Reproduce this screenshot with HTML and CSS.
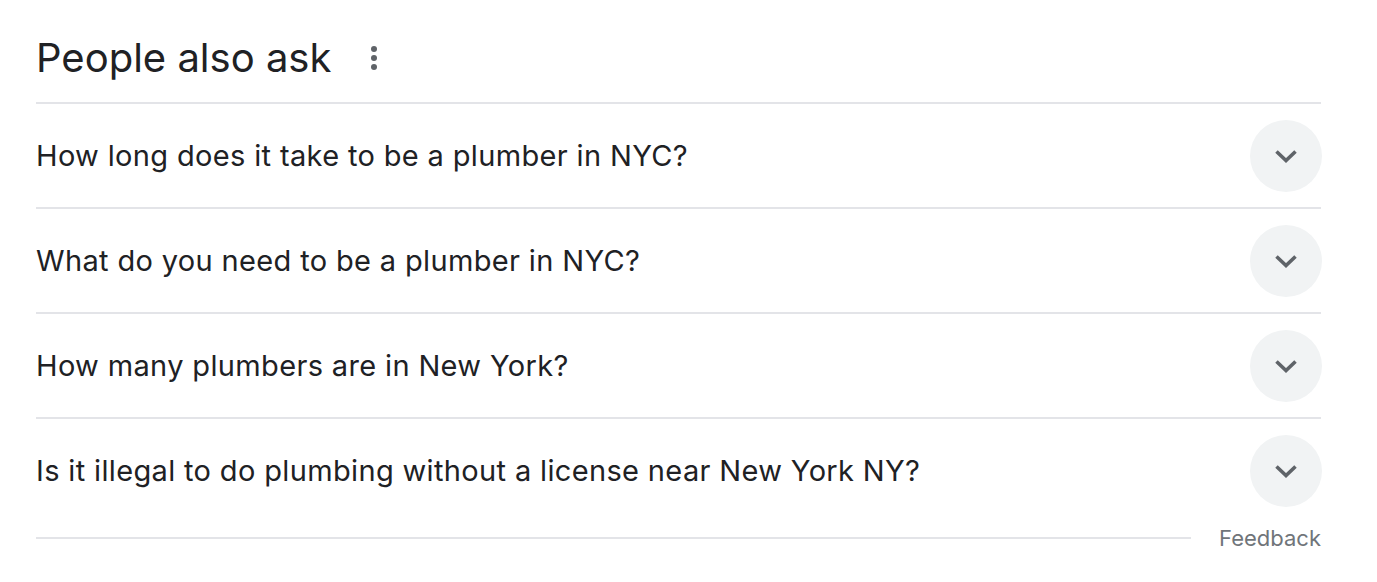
FILE: index.html
```html
<!DOCTYPE html>
<html>
<head>
<meta charset="utf-8">
<link rel="stylesheet" href="styles.css">
</head>
<body>
<div class="paa">
  <div class="head">
    <h2 class="title">People also ask</h2>
    <svg class="dots" width="12" height="28" viewBox="0 0 12 28"><circle cx="6" cy="5" r="3"/><circle cx="6" cy="14" r="3"/><circle cx="6" cy="23" r="3"/></svg>
  </div>
  <div class="row"><span class="q">How long does it take to be a plumber in NYC?</span><span class="btn"><svg width="24" height="14" viewBox="0 0 24 14"><path d="M2.5 2.5l9.5 9 9.5-9"/></svg></span></div>
  <div class="row"><span class="q">What do you need to be a plumber in NYC?</span><span class="btn"><svg width="24" height="14" viewBox="0 0 24 14"><path d="M2.5 2.5l9.5 9 9.5-9"/></svg></span></div>
  <div class="row"><span class="q">How many plumbers are in New York?</span><span class="btn"><svg width="24" height="14" viewBox="0 0 24 14"><path d="M2.5 2.5l9.5 9 9.5-9"/></svg></span></div>
  <div class="row last"><span class="q">Is it illegal to do plumbing without a license near New York NY?</span><span class="btn"><svg width="24" height="14" viewBox="0 0 24 14"><path d="M2.5 2.5l9.5 9 9.5-9"/></svg></span></div>
  <div class="foot"><span class="rule"></span><span class="fb">Feedback</span></div>
</div>
</body>
</html>
```
FILE: styles.css
```css
html, body { margin: 0; padding: 0; background: #fff; }
body { font-family: Inter, Roboto, "Liberation Sans", Arial, sans-serif; color: #202124; }
.paa { width: 1285px; margin-left: 36px; }
.head { border-bottom: 2px solid #e3e4e8; display: flex; align-items: center; box-sizing: border-box; height: 104px; padding-top: 14px; }
.title { margin: 0; font-weight: 400; font-size: 40px; line-height: 52px; }
.dots { margin-left: 37px; fill: #5f6368; }
.row { height: 105px; box-sizing: border-box; border-bottom: 2px solid #e3e4e8; display: flex; align-items: center; justify-content: space-between; }
.row.last { border-bottom: none; height: 103px; }
.q { font-size: 29px; line-height: 36px; letter-spacing: 0.35px; }
.btn { width: 72px; height: 72px; border-radius: 50%; background: #f1f3f4; display: flex; align-items: center; justify-content: center; margin-right: -1px; }
.btn svg path { fill: none; stroke: #5f6368; stroke-width: 3.6; }
.foot { display: flex; align-items: center; height: 31px; }
.rule { flex: 1; height: 2px; background: #e3e4e8; margin-right: 28px; }
.fb { font-size: 22px; color: #70757a; }
```
